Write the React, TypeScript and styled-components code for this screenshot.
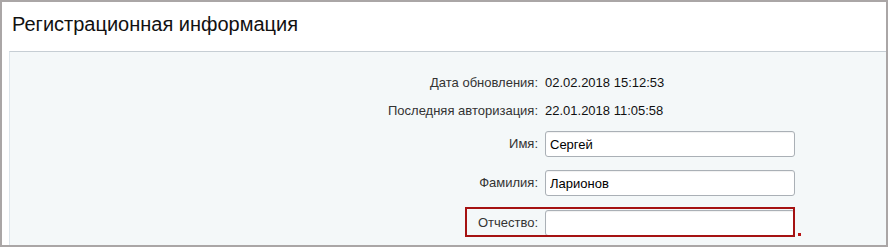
import React from "react";
import styled, { createGlobalStyle } from "styled-components";

const Global = createGlobalStyle`
  html, body { margin: 0; padding: 0; background: #ffffff; }
  body { font-family: "Liberation Sans", Arial, sans-serif; }
  * { box-sizing: border-box; }
`;

const Frame = styled.div`
  width: 888px;
  height: 247px;
  border: 2px solid #aaa6a6;
  background: #ffffff;
  display: flex;
  flex-direction: column;
  overflow: hidden;
`;

const Header = styled.h1`
  margin: 0;
  height: 49px;
  padding: 12px 0 0 10px;
  font-size: 20px;
  line-height: 20px;
  font-weight: normal;
  color: #111111;
  flex: none;
`;

const Panel = styled.div`
  flex: 1;
  margin-left: 7px;
  background: #f4f8f9;
  border-top: 1px solid #c6ced4;
  border-left: 1px solid #dde5eb;
  padding-top: 17px;
  font-size: 13px;
  color: #222222;
`;

const Row = styled.div<{ $gap?: number; $input?: boolean }>`
  position: relative;
  display: grid;
  grid-template-columns: 528px 1fr;
  column-gap: 7px;
  align-items: center;
  height: ${(p) => (p.$input ? "26px" : "28px")};
  line-height: 28px;
  margin-top: ${(p) => p.$gap ?? 0}px;
`;

const Label = styled.span`
  text-align: right;
  color: #333333;
  white-space: nowrap;
`;

const Value = styled.span`
  color: #111111;
  white-space: nowrap;
`;

const Input = styled.input`
  width: 250px;
  height: 26px;
  border: 1px solid #aab0b6;
  border-radius: 3px;
  background: #ffffff;
  padding: 0 4px;
  font-family: "Liberation Sans", Arial, sans-serif;
  font-size: 13px;
  color: #000000;
  outline: none;
  box-shadow: inset 0 1px 1px rgba(0, 0, 0, 0.06);
`;

const Highlight = styled.div`
  position: absolute;
  left: 455px;
  top: -2px;
  width: 330px;
  height: 30px;
  border: 2px solid #a51212;
  pointer-events: none;
`;

const Dot = styled.div`
  position: absolute;
  left: 788px;
  top: 24px;
  width: 3px;
  height: 3px;
  background: #b81414;
`;

export default function App() {
  return (
    <>
      <Global />
      <Frame>
        <Header>Регистрационная информация</Header>
        <Panel>
          <Row>
            <Label>Дата обновления:</Label>
            <Value>02.02.2018 15:12:53</Value>
          </Row>
          <Row>
            <Label>Последняя авторизация:</Label>
            <Value>22.01.2018 11:05:58</Value>
          </Row>
          <Row $input $gap={5}>
            <Label>Имя:</Label>
            <Input defaultValue="Сергей" />
          </Row>
          <Row $input $gap={13}>
            <Label>Фамилия:</Label>
            <Input defaultValue="Ларионов" />
          </Row>
          <Row $input $gap={14}>
            <Label>Отчество:</Label>
            <Input defaultValue="" />
            <Highlight />
            <Dot />
          </Row>
        </Panel>
      </Frame>
    </>
  );
}
